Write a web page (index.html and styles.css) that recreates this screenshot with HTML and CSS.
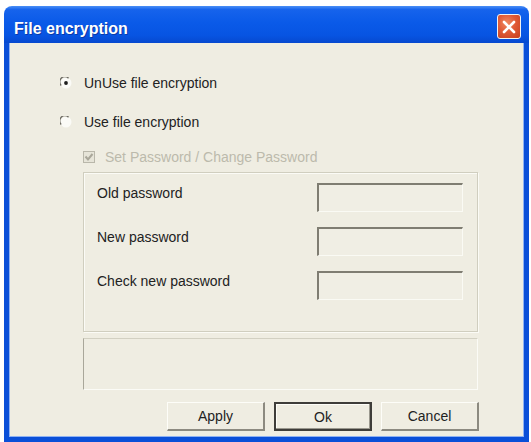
FILE: index.html
```html
<!DOCTYPE html>
<html>
<head>
<meta charset="utf-8">
<title>File encryption</title>
<link rel="stylesheet" href="styles.css">
</head>
<body>
<div class="window">
  <div class="titlebar">
    <span class="title">File encryption</span>
    <span class="close">
      <svg width="14" height="14" viewBox="0 0 14 14"><path d="M2 2 L12 12 M12 2 L2 12" stroke="#fff" stroke-width="2.6" stroke-linecap="round"/></svg>
    </span>
  </div>
  <div class="frame">
    <div class="content">
      <label class="opt">
        <svg class="radio" width="12" height="12" viewBox="0 0 12 12"><circle cx="6" cy="6" r="5.5" fill="#fbfbf7"/><path d="M1.2 8.5 A5 5 0 0 1 8.5 1.2" fill="none" stroke="#6e6c64" stroke-width="1.3"/><circle cx="6" cy="6" r="1.9" fill="#1e1e1e"/></svg>
        <span>UnUse file encryption</span>
      </label>
      <label class="opt opt-next">
        <svg class="radio" width="12" height="12" viewBox="0 0 12 12"><circle cx="6" cy="6" r="5.5" fill="#fbfbf7"/><path d="M1.2 8.5 A5 5 0 0 1 8.5 1.2" fill="none" stroke="#6e6c64" stroke-width="1.3"/></svg>
        <span>Use file encryption</span>
      </label>
      <div class="indent">
        <label class="check disabled">
          <svg class="checkbox" width="12" height="12" viewBox="0 0 12 12"><rect x="0.5" y="0.5" width="11" height="11" fill="#e6e4d8" stroke="#b9b7aa"/><path d="M2.5 5.5 L5 8.5 L9.5 3" fill="none" stroke="#a9a79a" stroke-width="2"/></svg>
          <span>Set Password / Change Password</span>
        </label>
        <div class="group">
          <div class="field">
            <span class="label">Old password</span>
            <span class="textbox"></span>
          </div>
          <div class="field">
            <span class="label">New password</span>
            <span class="textbox"></span>
          </div>
          <div class="field">
            <span class="label">Check new password</span>
            <span class="textbox"></span>
          </div>
        </div>
        <div class="status"></div>
        <div class="buttons">
          <button class="btn">Apply</button>
          <button class="btn btn-default">Ok</button>
          <button class="btn">Cancel</button>
        </div>
      </div>
    </div>
  </div>
</div>
</body>
</html>
```
FILE: styles.css
```css
html, body {
  margin: 0;
  padding: 0;
  background: #ffffff;
}
body {
  font-family: "Liberation Sans", Arial, sans-serif;
  font-size: 14px;
  color: #222;
}
.window {
  margin: 6px 0 0 4px;
  width: 525px;
  height: 436px;
  display: flex;
  flex-direction: column;
}
.titlebar {
  height: 37px;
  box-sizing: border-box;
  padding: 8px 8px 0 10px;
  display: flex;
  justify-content: space-between;
  align-items: flex-start;
  border-radius: 8px 8px 0 0;
  background: linear-gradient(#4a8ff6 0%, #1663ec 10%, #0a5ae8 45%, #0754e2 80%, #0649cf 100%);
}
.title {
  margin-top: 5px;
  color: #fff;
  font-weight: bold;
  font-size: 16px;
  line-height: 20px;
  text-shadow: 1px 1px 0 #0a3aa8;
}
.close {
  width: 24px;
  height: 25px;
  box-sizing: border-box;
  border: 1px solid #f2f2f2;
  border-radius: 3px;
  background: radial-gradient(circle at 40% 35%, #f08a62 0%, #e05a36 45%, #c53d1d 100%);
  display: flex;
  align-items: center;
  justify-content: center;
}
.frame {
  flex: 1;
  display: flex;
  border: 5px solid #0a4fd8;
  border-top: 0;
}
.content {
  flex: 1;
  background: #efede2;
  box-shadow: inset 1px 0 0 #8fb2f2, inset -1px 0 0 #8fb2f2, inset 0 -1px 0 #8fb2f2;
  display: flex;
  flex-direction: column;
  padding: 32px 0 0 51px;
}
.opt {
  display: flex;
  align-items: center;
  gap: 12px;
  height: 16px;
}
.opt-next {
  margin-top: 23px;
}
.indent {
  margin-left: 23px;
  width: 395px;
  display: flex;
  flex-direction: column;
}
.check {
  margin-top: 19px;
  display: flex;
  align-items: center;
  gap: 10px;
  height: 16px;
}
.disabled {
  color: #bcbaac;
}
.group {
  margin-top: 7px;
  height: 160px;
  box-sizing: border-box;
  border: 1px solid #d0cebf;
  box-shadow: inset 1px 1px 0 #fbfbf6, 1px 1px 0 #fbfbf6;
  padding: 10px 14px 0 13px;
  display: flex;
  flex-direction: column;
  gap: 15px;
}
.field {
  display: flex;
  justify-content: space-between;
  align-items: flex-start;
  height: 29px;
}
.label {
  line-height: 16px;
  padding-top: 2px;
}
.textbox {
  width: 146px;
  height: 29px;
  box-sizing: border-box;
  border-top: 2px solid #7f7d72;
  border-left: 2px solid #7f7d72;
  border-right: 1px solid #fafaf4;
  border-bottom: 1px solid #fafaf4;
  background: #f0eee4;
}
.status {
  margin-top: 6px;
  height: 52px;
  box-sizing: border-box;
  border-top: 1px solid #d2d0c2;
  border-left: 1px solid #a9a79a;
  border-right: 1px solid #fbfbf6;
  border-bottom: 1px solid #fbfbf6;
}
.buttons {
  margin-top: 12px;
  display: flex;
  justify-content: flex-end;
  gap: 9px;
  margin-right: -1px;
}
.btn {
  width: 98px;
  height: 29px;
  box-sizing: border-box;
  font-family: "Liberation Sans", Arial, sans-serif;
  font-size: 14px;
  color: #222;
  background: #efede2;
  border-top: 1px solid #fdfdf8;
  border-left: 1px solid #fdfdf8;
  border-right: 2px solid #8c8a80;
  border-bottom: 2px solid #8c8a80;
  padding: 0;
}
.btn-default {
  border: 2px solid #3e3d39;
  box-shadow: inset -1px -1px 0 #9a988e, inset 1px 1px 0 #fdfdf8;
}
```
